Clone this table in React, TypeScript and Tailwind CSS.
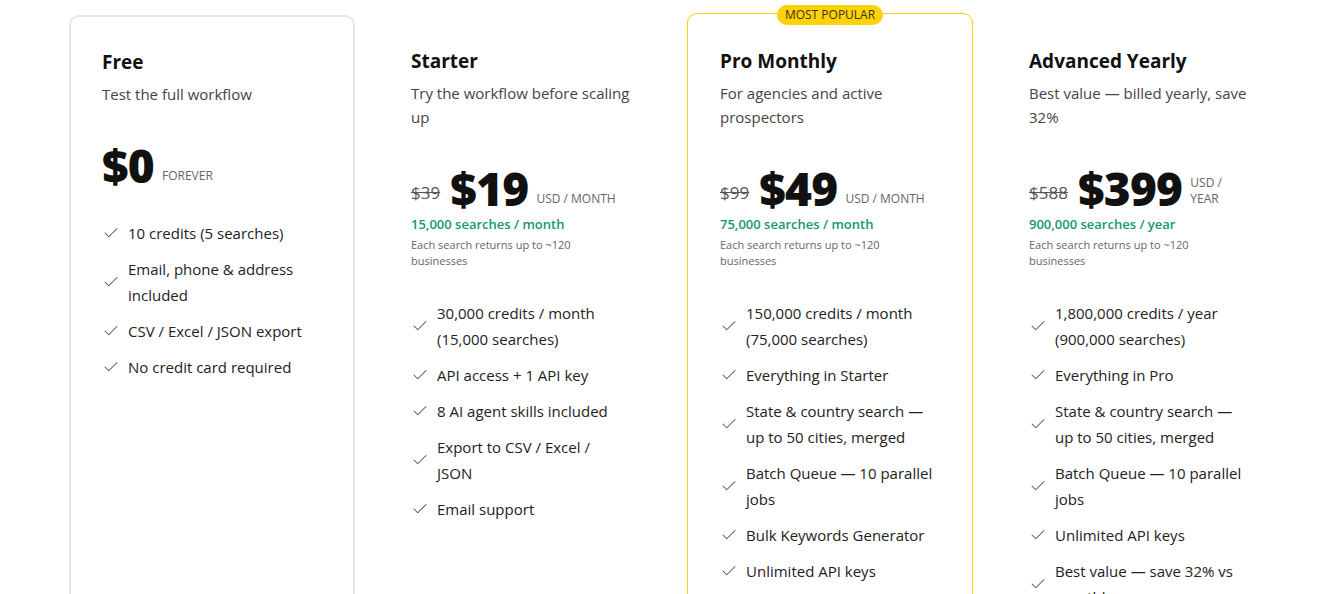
import { Check } from 'lucide-react';

type Plan = {
  name: string;
  tagline: string;
  oldPrice?: string;
  price: string;
  unit: string;
  searches?: string;
  features: string[];
  popular?: boolean;
  free?: boolean;
};

const plans: Plan[] = [
  {
    name: 'Free',
    tagline: 'Test the full workflow',
    price: '$0',
    unit: 'FOREVER',
    free: true,
    features: [
      '10 credits (5 searches)',
      'Email, phone & address included',
      'CSV / Excel / JSON export',
      'No credit card required',
    ],
  },
  {
    name: 'Starter',
    tagline: 'Try the workflow before scaling up',
    oldPrice: '$39',
    price: '$19',
    unit: 'USD / MONTH',
    searches: '15,000 searches / month',
    features: [
      '30,000 credits / month (15,000 searches)',
      'API access + 1 API key',
      '8 AI agent skills included',
      'Export to CSV / Excel / JSON',
      'Email support',
    ],
  },
  {
    name: 'Pro Monthly',
    tagline: 'For agencies and active prospectors',
    oldPrice: '$99',
    price: '$49',
    unit: 'USD / MONTH',
    searches: '75,000 searches / month',
    popular: true,
    features: [
      '150,000 credits / month (75,000 searches)',
      'Everything in Starter',
      'State & country search — up to 50 cities, merged',
      'Batch Queue — 10 parallel jobs',
      'Bulk Keywords Generator',
      'Unlimited API keys',
    ],
  },
  {
    name: 'Advanced Yearly',
    tagline: 'Best value — billed yearly, save 32%',
    oldPrice: '$588',
    price: '$399',
    unit: 'USD / YEAR',
    searches: '900,000 searches / year',
    features: [
      '1,800,000 credits / year (900,000 searches)',
      'Everything in Pro',
      'State & country search — up to 50 cities, merged',
      'Batch Queue — 10 parallel jobs',
      'Unlimited API keys',
      'Best value — save 32% vs monthly',
    ],
  },
];

const PlanCard = ({ plan }: { plan: Plan }) => {
  const frame = plan.free
    ? 'mt-[2px] border-2 border-[#e6e6e6] pt-[31px] px-[31px]'
    : plan.popular
      ? 'border border-[#f5d10a] pt-[33px] px-8'
      : 'border border-transparent pt-[33px] px-8';

  return (
    <div className={`relative h-[640px] rounded-[10px] bg-white ${frame}`}>
      {plan.popular && (
        <span className="absolute left-1/2 top-[-9px] -translate-x-1/2 rounded-full bg-[#fdd20a] px-2 text-[12px] font-medium leading-5 text-[#3b3410]">
          MOST POPULAR
        </span>
      )}

      <h3 className="text-[19px] font-bold leading-7 text-[#111]">{plan.name}</h3>
      <p className="mt-[6px] text-[15px] leading-6 text-[#444]">{plan.tagline}</p>

      {/* Price */}
      <div className="mt-9 flex items-end gap-2">
        {plan.oldPrice && (
          <span className="mr-[2px] pb-[10px] text-[17px] leading-none text-[#555] line-through">
            {plan.oldPrice}
          </span>
        )}
        <span className="text-[46px] font-extrabold leading-none tracking-[-0.75px] text-[#111]">{plan.price}</span>
        <span className="pb-1 text-[12px] leading-4 text-[#666]">{plan.unit}</span>
      </div>

      {plan.searches && (
        <>
          <p className="mt-[5px] text-[13px] font-semibold leading-4 text-[#12976f]">{plan.searches}</p>
          <p className="mt-[5px] max-w-[190px] text-[11px] leading-4 text-[#666]">
            Each search returns up to ~120 businesses
          </p>
        </>
      )}

      {/* Features */}
      <ul className={`${plan.free ? 'mt-8' : 'mt-[31px]'} flex flex-col gap-[10px] pr-[5px]`}>
        {plan.features.map((f) => (
          <li key={f} className="flex items-center gap-2">
            <Check className="h-[18px] w-[18px] shrink-0 text-[#555]" strokeWidth={1.4} />
            <span className="text-[15px] leading-[26px] text-[#222]">{f}</span>
          </li>
        ))}
      </ul>
    </div>
  );
};

export default function App() {
  return (
    <div className="h-[594px] overflow-hidden bg-white font-['Open_Sans',sans-serif]">
      <div className="pl-[69px] pr-[58px] pt-[13px]">
        <div className="grid grid-cols-4 items-start gap-[23px]">
          {plans.map((p) => (
            <PlanCard key={p.name} plan={p} />
          ))}
        </div>
      </div>
    </div>
  );
}
